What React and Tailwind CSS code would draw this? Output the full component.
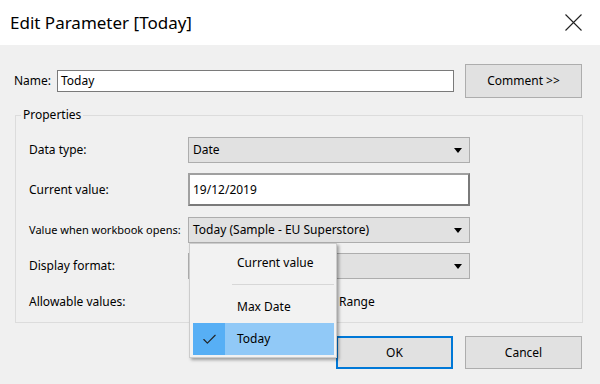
import { Check } from 'lucide-react';

const font = { fontFamily: '"Segoe UI", "Noto Sans", sans-serif' };

function Arrow() {
  return (
    <svg width="8" height="5" viewBox="0 0 8 5" className="shrink-0">
      <path d="M0 0h8L4 5z" fill="#000" />
    </svg>
  );
}

function Dropdown({ value }) {
  return (
    <div className="flex h-[26px] w-[282px] items-center justify-between border border-[#adadad] bg-[#e1e1e1] pl-[4px] pr-[7px]">
      <span>{value}</span>
      <Arrow />
    </div>
  );
}

function Row({ label, children, tight }) {
  return (
    <div className="flex items-center">
      <span className={tight ? 'w-[159px] shrink-0 whitespace-nowrap text-[11px]' : 'w-[159px] shrink-0 whitespace-nowrap'}>
        {label}
      </span>
      {children}
    </div>
  );
}

export default function App() {
  return (
    <div
      className="relative h-[384px] w-[600px] overflow-hidden bg-[#f0f0f0] text-[12px] text-black"
      style={font}
    >
      <div className="flex h-[45px] items-center justify-between bg-white pl-[10px] pr-[18px]">
        <span className="text-[17px] leading-none">Edit Parameter [Today]</span>
        <svg width="17" height="17" viewBox="0 0 17 17">
          <path d="M0.5 0.5L16.5 16.5M16.5 0.5L0.5 16.5" stroke="#222" strokeWidth="1.1" />
        </svg>
      </div>

      <div className="flex items-center pl-[14px] pt-[19px]">
        <span className="w-[43px]">Name:</span>
        <div className="flex h-[22px] w-[397px] items-center border border-[#7a7a7a] bg-white pl-[3px]">
          Today
        </div>
        <button className="ml-[11px] h-[34px] w-[117px] border border-[#adadad] bg-[#e1e1e1]">
          Comment &gt;&gt;
        </button>
      </div>

      <div className="relative mx-[15px] mt-[17px] h-[208px] w-[568px] border border-[#dcdcdc] px-[13px] pt-[21px]">
        <span className="absolute -top-[8px] left-[5px] bg-[#f0f0f0] px-[2px] leading-[14px]">Properties</span>
        <Row label="Data type:">
          <Dropdown value="Date" />
        </Row>
        <div className="mt-[10px]">
          <Row label="Current value:">
            <div className="flex h-[33px] w-[282px] items-center border-2 border-[#7a7a7a] border-t-[#a0a0a0] border-l-[#a0a0a0] bg-white pl-[3px]">
              19/12/2019
            </div>
          </Row>
        </div>
        <div className="mt-[11px]">
          <Row label="Value when workbook opens:" tight>
            <Dropdown value="Today (Sample - EU Superstore)" />
          </Row>
        </div>
        <div className="mt-[10px]">
          <Row label="Display format:">
            <Dropdown value="" />
          </Row>
        </div>
        <div className="mt-[10px] flex h-[26px] items-center">
          <span className="w-[310px] shrink-0">Allowable values:</span>
          <span>Range</span>
        </div>
      </div>

      <div className="flex justify-end gap-[12px] pr-[18px] pt-[13px]">
        <button className="h-[33px] w-[117px] border-2 border-[#0078d7] bg-[#e1e1e1]">OK</button>
        <button className="h-[33px] w-[117px] border border-[#adadad] bg-[#e1e1e1]">Cancel</button>
      </div>

      <div className="absolute left-[189px] top-[243px] w-[148px] border border-[#cccccc] bg-[#f2f2f2] pb-[2px] pl-[3px] pr-[2px] pt-[3px] shadow-[2px_2px_3px_rgba(0,0,0,0.35)]">
        <div className="flex h-[32px] items-center pl-[44px]">Current value</div>
        <div className="ml-[39px] mt-[5px] mb-[6px] h-px bg-[#d7d7d7]" />
        <div className="flex h-[32px] items-center pl-[44px]">Max Date</div>
        <div className="flex h-[32px] items-center bg-[#91c9f7]">
          <div className="flex h-full w-[32px] items-center justify-center bg-[#57aff5]">
            <Check size={17} strokeWidth={1.6} color="#222" />
          </div>
          <span className="pl-[12px]">Today</span>
        </div>
      </div>
    </div>
  );
}
